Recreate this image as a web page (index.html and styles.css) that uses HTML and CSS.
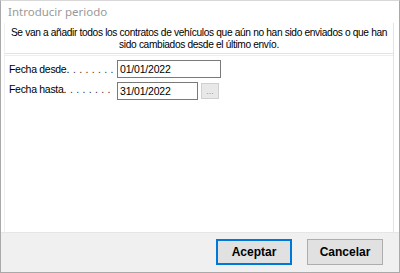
FILE: index.html
```html
<!DOCTYPE html>
<html>
<head>
<meta charset="utf-8">
<link rel="stylesheet" href="styles.css">
</head>
<body>
<div class="window">
  <div class="titlebar">Introducir periodo</div>
  <div class="client">
    <div class="panel">
      <div class="message">
        <p>Se van a añadir todos los contratos de vehículos que aún no han sido enviados o que han</p>
        <p>sido cambiados desde el último envío.</p>
      </div>
      <div class="form">
        <div class="row">
          <span class="label">Fecha desde.<span class="leader">. . . . . . .</span></span>
          <span class="field wide">01/01/2022</span>
        </div>
        <div class="row">
          <span class="label">Fecha hasta.<span class="leader">. . . . . . .</span></span>
          <span class="field narrow">31/01/2022</span>
          <span class="dots-btn">...</span>
        </div>
      </div>
    </div>
    <div class="footer">
      <button class="btn default">Aceptar</button>
      <button class="btn">Cancelar</button>
    </div>
  </div>
</div>
</body>
</html>
```

FILE: styles.css
```css
* { box-sizing: border-box; }
html, body { margin: 0; padding: 0; background: #ffffff; }
body { width: 400px; height: 273px; overflow: hidden; font-family: "Liberation Sans", Arial, sans-serif; }

.window {
  width: 400px;
  height: 273px;
  border: 1px solid #a9a9a9;
  border-top-color: #d8d8d8;
  display: flex;
  flex-direction: column;
  background: #ffffff;
}

.titlebar {
  height: 22px;
  padding: 3px 0 0 7px;
  font-family: "Noto Sans", "Open Sans", sans-serif;
  font-size: 11.5px;
  color: #9a9a9a;
  line-height: 16px;
}

.client {
  flex: 1;
  display: flex;
  flex-direction: column;
  padding: 0 5px 0 3px;
}

.panel {
  flex: 1;
  border-left: 1px solid #f0f0f0;
  border-right: 1px solid #e3e3e3;
  display: flex;
  flex-direction: column;
}

.message {
  height: 31px;
  border-bottom: 1px solid #e3e3e3;
  box-shadow: 0 1px 0 #ffffff, 0 2px 0 #eeeeee;
  text-align: center;
  font-size: 10.2px;
  letter-spacing: -0.35px;
  color: #000;
  padding-top: 4px;
  white-space: nowrap;
}
.message p { margin: 0; line-height: 12px; }

.form {
  padding: 6px 0 0 4px;
  display: flex;
  flex-direction: column;
  gap: 2px;
}

.row {
  display: flex;
  align-items: center;
  height: 18px;
}

.label {
  width: 108px;
  flex-shrink: 0;
  font-size: 10.5px;
  letter-spacing: -0.3px;
  color: #000;
  white-space: nowrap;
}
.leader {
  letter-spacing: 0.2px;
  margin-left: 4px;
  color: #333;
}

.field {
  height: 18px;
  border: 1px solid #7a7a7a;
  font-size: 10.5px;
  letter-spacing: -0.2px;
  padding: 1px 0 0 2px;
  line-height: 14px;
  background: #fff;
}
.wide { width: 104px; }
.narrow { width: 81px; margin-top: 3px; }

.dots-btn {
  width: 18px;
  height: 16px;
  margin-left: 3px;
  margin-top: 4px;
  border: 1px solid #cfcfcf;
  background: #e8e8e8;
  color: #9a9a9a;
  font-size: 9px;
  text-align: center;
  line-height: 14px;
}

.footer {
  height: 40px;
  margin: 0 -5px 0 -3px;
  background: #f0f0f0;
  border-top: 1px solid #e6e6e6;
  display: flex;
  justify-content: flex-end;
  align-items: flex-start;
  gap: 15px;
  padding: 6px 16px 0 0;
}

.btn {
  width: 76px;
  height: 26px;
  background: #e1e1e1;
  border: 1px solid #adadad;
  font-family: "Liberation Sans", Arial, sans-serif;
  font-weight: bold;
  font-size: 12px;
  color: #000;
  padding: 0;
}
.btn.default {
  border: 2px solid #0078d7;
}
```
